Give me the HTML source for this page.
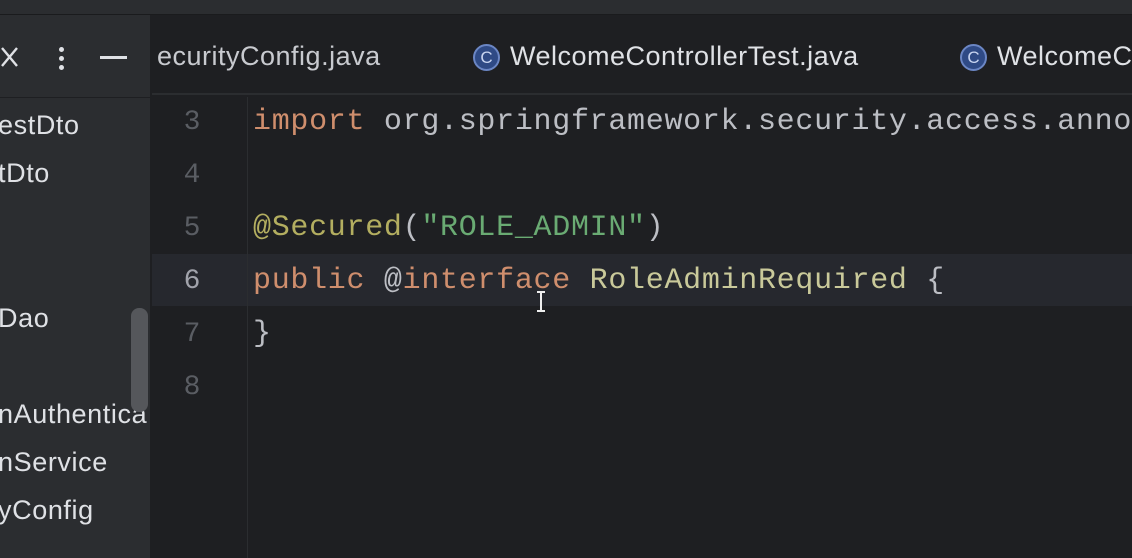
<!DOCTYPE html>
<html><head><meta charset="utf-8"><style>
*{margin:0;padding:0;box-sizing:border-box}
body{width:1132px;height:558px;overflow:hidden;background:#1e1f22;position:relative;font-family:"Liberation Sans",sans-serif}
.top{position:absolute;left:0;top:0;width:1132px;height:15px;background:#2b2d30;border-bottom:1px solid #1a1b1d}
.left{position:absolute;left:0;top:15px;width:151px;height:543px;background:#2b2d30;border-right:1px solid #1e1f22;overflow:hidden}
.lhead{position:absolute;left:0;top:0;width:151px;height:83px;border-bottom:1px solid #1e1f22}
.ltxt{position:absolute;left:-2px;color:#dfe1e5;font-size:27px;letter-spacing:0.6px;white-space:nowrap}
.sb{position:absolute;left:131px;top:293px;width:17px;height:104px;border-radius:8px;background:#55575b}
.tabs{position:absolute;left:152px;top:15px;width:980px;height:80px;background:#1e1f22;border-bottom:2px solid #2b2d30;overflow:hidden}
.tab{position:absolute;top:26px;color:#dfe1e5;font-size:27px;letter-spacing:0.5px;white-space:nowrap}
.ic{display:inline-block;width:27px;height:27px;border-radius:50%;background:#2f4a85;border:2px solid #6b86c4;color:#c8d4f0;font-size:17px;text-align:center;line-height:23px;vertical-align:2px;margin-right:10px;letter-spacing:0}
.gut{position:absolute;left:152px;top:97px;width:96px;height:461px;border-right:1px solid #2b2d30}
.cur{position:absolute;left:152px;top:254px;width:980px;height:52px;background:#26282e}
.ln{position:absolute;left:152px;width:80px;text-align:center;color:#5a5d63;font-family:"Liberation Mono",monospace;font-size:28px}
.code{position:absolute;left:253px;font-family:"Liberation Mono",monospace;font-size:30px;letter-spacing:0.7px;white-space:pre;color:#bcbec4}
.k{color:#cf8e6d}.a{color:#b3ae60}.s{color:#6aab73}.c{color:#c9c99a}
</style></head><body>
<div class="top"></div>
<div class="left">
 <div class="lhead">
  <svg style="position:absolute;left:0;top:30px" width="20" height="24"><path d="M2 3 L17 21 M17 3 L2 21" stroke="#dfe1e5" stroke-width="2.4" fill="none"/></svg>
  <div style="position:absolute;left:59px;top:32px;width:5px;height:5px;border-radius:50%;background:#dfe1e5"></div>
  <div style="position:absolute;left:59px;top:41px;width:5px;height:5px;border-radius:50%;background:#dfe1e5"></div>
  <div style="position:absolute;left:59px;top:50px;width:5px;height:5px;border-radius:50%;background:#dfe1e5"></div>
  <div style="position:absolute;left:100px;top:41px;width:27px;height:2.5px;background:#dfe1e5"></div>
 </div>
 <div class="ltxt" style="top:95px">estDto</div>
 <div class="ltxt" style="top:143px">tDto</div>
 <div class="ltxt" style="top:288px">Dao</div>
 <div class="ltxt" style="top:384px">nAuthentica</div>
 <div class="ltxt" style="top:432px">nService</div>
 <div class="ltxt" style="top:480px">yConfig</div>
 <div class="sb"></div>
</div>
<div class="tabs">
 <div class="tab" style="left:5px;color:#c8cacf">ecurityConfig.java</div>
 <div class="tab" style="left:321px"><span class="ic">C</span>WelcomeControllerTest.java</div>
 <div class="tab" style="left:808px"><span class="ic">C</span>WelcomeC</div>
</div>
<div class="cur"></div>
<div class="gut"></div>
<div class="ln" style="top:107px">3</div>
<div class="ln" style="top:160px">4</div>
<div class="ln" style="top:213px">5</div>
<div class="ln" style="top:266px;color:#a1a3ab">6</div>
<div class="ln" style="top:319px">7</div>
<div class="ln" style="top:372px">8</div>
<div class="code" style="top:105px"><span class="k">import</span> org.springframework.security.access.anno</div>
<div class="code" style="top:211px"><span class="a">@Secured</span>(<span class="s">"ROLE_ADMIN"</span>)</div>
<div class="code" style="top:264px"><span class="k">public</span> <span class="k"><span style="color:#bcbec4">@</span>interface</span> <span class="c">RoleAdminRequired</span> {</div>
<div class="code" style="top:317px">}</div>
<svg style="position:absolute;left:535px;top:290px" width="12" height="24"><path d="M2 2 H10 M6 2 V21 M2 21 H10" stroke="#eee" stroke-width="2" fill="none"/></svg>
</body></html>
